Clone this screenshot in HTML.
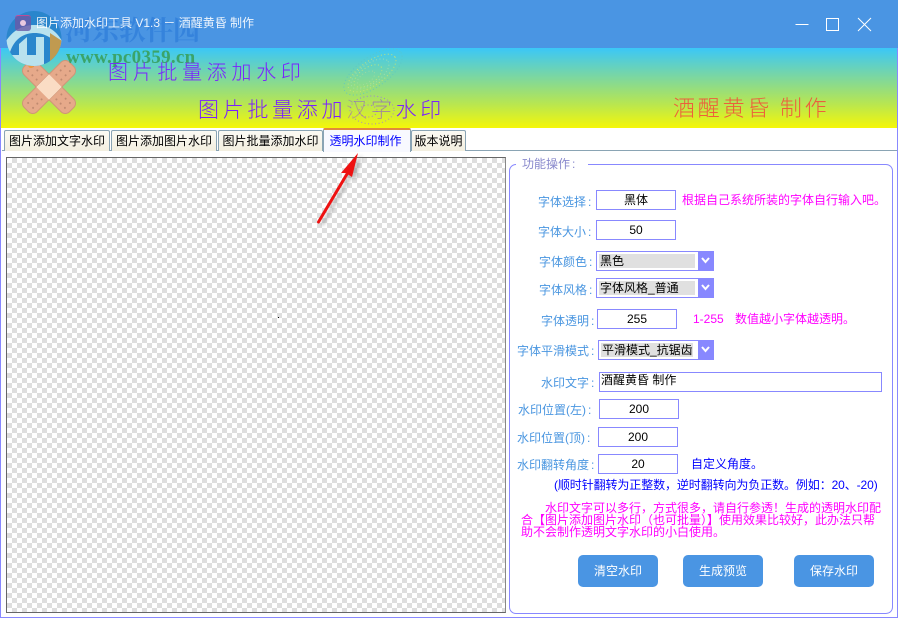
<!DOCTYPE html>
<html><head><meta charset="utf-8">
<style>
html,body{margin:0;padding:0}
body{width:898px;height:618px;position:relative;overflow:hidden;background:#fff;font-family:"Liberation Sans","WenQuanYi Zen Hei","Noto Sans CJK SC",sans-serif;font-size:12px;color:#000}
.a{position:absolute;white-space:nowrap}
.l{position:absolute;white-space:nowrap;color:#4a96e0;line-height:16px;height:16px}
.l span,.c{margin-left:2px}
.i{position:absolute;box-sizing:border-box;background:#fff;border:1px solid #8888ff;text-align:center;line-height:19px;height:20px;width:80px}
.s{position:absolute;box-sizing:border-box;background:#fff;border:1px solid #8888ff;height:20px}
.s b{position:absolute;font-weight:normal;left:2px;top:2px;height:14px;background:#e0e0e0;line-height:14px;padding-left:1px;box-sizing:border-box}
.s i{position:absolute;right:0;top:0;width:15px;height:18px;background:#8888ff}
.s svg{position:absolute;right:3px;top:5px}
.t{position:absolute;box-sizing:border-box;top:130px;height:21px;border:1px solid #8aa4b4;border-bottom:none;border-radius:2px 2px 0 0;background:linear-gradient(#fbfaf4,#f3efe0);text-align:center;line-height:21px}
.b{position:absolute;top:555px;width:80px;height:32px;border-radius:5px;background:#4a95e3;color:#fff;text-align:center;line-height:33px;font-size:12px}
.m{color:#ff00ff}.u{color:#0000ff}
.h{position:absolute;white-space:nowrap;font-family:"Noto Sans CJK SC",sans-serif;font-weight:300}
</style></head><body>
<div class="a" style="left:0;top:0;width:898px;height:48px;background:#4a95e3"></div>
<div class="a" style="left:1px;top:48px;width:896px;height:80px;background:linear-gradient(#3bc7f7,#b8e650 70%,#f5f708)"></div>
<div class="a" style="left:0;top:48px;width:1px;height:570px;background:#8888ff"></div>
<div class="a" style="left:897px;top:48px;width:1px;height:570px;background:#8888ff"></div>
<div class="a" style="left:0;top:617px;width:898px;height:1px;background:#8888ff"></div>

<!-- bandage -->
<svg class="a" style="left:18px;top:56px" width="62" height="62" viewBox="0 0 62 62">
<g transform="translate(31,31) rotate(45)">
<rect x="-32" y="-9" width="64" height="18" rx="6" fill="#e6a98a" stroke="#cf9578"/>
<rect x="-9" y="-32" width="18" height="64" rx="6" fill="#e6a98a" stroke="#cf9578"/>
<rect x="-9" y="-9" width="18" height="18" fill="#fadcc4"/>
<g fill="#c08a70"><circle cx="-26" cy="-3.500" r="1"/><circle cx="-26" cy="3.500" r="1"/><circle cx="-20" cy="-3.500" r="1"/><circle cx="-20" cy="3.500" r="1"/><circle cx="-14" cy="-3.500" r="1"/><circle cx="-14" cy="3.500" r="1"/><circle cx="26" cy="-3.500" r="1"/><circle cx="26" cy="3.500" r="1"/><circle cx="20" cy="-3.500" r="1"/><circle cx="20" cy="3.500" r="1"/><circle cx="14" cy="-3.500" r="1"/><circle cx="14" cy="3.500" r="1"/><circle cy="-26" cx="-3.500" r="1"/><circle cy="-26" cx="3.500" r="1"/><circle cy="-20" cx="-3.500" r="1"/><circle cy="-20" cx="3.500" r="1"/><circle cy="-14" cx="-3.500" r="1"/><circle cy="-14" cx="3.500" r="1"/><circle cy="26" cx="-3.500" r="1"/><circle cy="26" cx="3.500" r="1"/><circle cy="20" cx="-3.500" r="1"/><circle cy="20" cx="3.500" r="1"/><circle cy="14" cx="-3.500" r="1"/><circle cy="14" cx="3.500" r="1"/></g>
</g></svg>
<div class="a" style="left:28px;top:62px;width:6px;height:6px;border-radius:50%;background:#f0983c"></div>

<!-- site logo -->
<svg class="a" style="left:6px;top:11px" width="56" height="55" viewBox="0 0 56 55">
<defs><clipPath id="c"><circle cx="28" cy="27.500" r="27.500"/></clipPath></defs>
<g clip-path="url(#c)">
<rect width="56" height="55" fill="#2a86cc"/>
<path d="M0 30C8 18 18 14 29 14C41 14 50 19 56 30L56 38C48 27 38 22 29 22C18 22 9 27 4 41L0 41Z" fill="#b9e2ee"/>
<path d="M13 33L21 26L21 46L13 46Z" fill="#b9e2ee"/>
<path d="M44 22L56 30L56 55L44 55Z" fill="#c09a50"/>
<path d="M6 44L30 44L30 26L38 26L38 55L6 55Z" fill="#b9e2ee"/>
<path d="M38 25L44 27L44 55L38 55Z" fill="#2a86cc"/>
</g></svg>

<div class="a" style="left:65px;top:12px;font:bold 27px/34px 'Noto Serif CJK SC',serif;color:#3583dc">河东软件园</div>
<div class="a" style="left:66px;top:47px;font:bold 19px/22px 'Liberation Serif',serif;color:#3aa46a;letter-spacing:.3px">www.pc0359.cn</div>

<!-- app icon & title -->
<div class="a" style="left:15px;top:15px;width:16px;height:16px;background:#6a5aa8;border-radius:3px;border-top:1px solid #e0408a;box-sizing:border-box;opacity:.8"></div>
<div class="a" style="left:20px;top:20px;width:6px;height:6px;background:#e8c8e0;border-radius:50%"></div>
<div class="a" style="left:36px;top:15px;color:#fff;line-height:17px;font-size:12px;opacity:.9">图片添加水印工具 V1.3 － 酒醒黄昏 制作</div>

<!-- window buttons -->
<svg class="a" style="left:790px;top:10px" width="90" height="30" fill="none" stroke="#fff" stroke-width="1">
<path d="M5.500 14.500H18.500"/><rect x="36.500" y="8.500" width="12" height="12"/><path d="M68 8L81 21M81 8L68 21"/>
</svg>

<!-- swirl -->
<svg class="a" style="left:340px;top:48px" width="70" height="80" fill="none">
<g stroke-dasharray="1 2.500" stroke-width="1" opacity=".8">
<ellipse cx="33" cy="24" rx="34" ry="15" transform="rotate(-35 33 24)" stroke="#5cc4c8"/>
<ellipse cx="32" cy="25" rx="28" ry="12" transform="rotate(-35 32 25)" stroke="#d8e66a"/>
<ellipse cx="30" cy="26" rx="22" ry="10" transform="rotate(-35 30 26)" stroke="#a8e0b0"/>
<ellipse cx="28" cy="28" rx="16" ry="8" transform="rotate(-35 28 28)" stroke="#c8e878"/>
<ellipse cx="26" cy="30" rx="10" ry="5" transform="rotate(-35 26 30)" stroke="#a8dca0"/>
<ellipse cx="32" cy="62" rx="22" ry="14" stroke="#9a70e8"/>
<ellipse cx="30" cy="62" rx="15" ry="9" stroke="#e0e050"/>
<ellipse cx="28" cy="63" rx="9" ry="6" stroke="#a060f0"/>
</g></svg>

<!-- banner text -->
<div class="h" style="left:108px;top:58px;font-size:20px;line-height:26px;letter-spacing:4.700px;color:#7a20ff">图片批量添加水印</div>
<div class="h" style="left:198px;top:95px;font-size:21px;line-height:28px;letter-spacing:3.700px;color:#7a20ff">图片批量添加<span style="opacity:.35">汉</span><span style="opacity:.45">字</span>水印</div>
<div class="h" style="left:673px;top:93px;font-size:22px;line-height:28px;letter-spacing:2.800px;color:#f2503a;opacity:.9">酒醒黄昏 制作</div>

<!-- tabs -->
<div class="a" style="left:2px;top:150px;width:895px;height:1px;background:#8aa4b4"></div>
<div class="t" style="left:4px;width:106px">图片添加文字水印</div>
<div class="t" style="left:111px;width:106px">图片添加图片水印</div>
<div class="t" style="left:218px;width:105px">图片批量添加水印</div>
<div class="t" style="left:411px;width:55px">版本说明</div>
<div class="t" style="left:323px;width:88px;top:128px;height:24px;background:#f8f9ff;border-top:2px solid #e08a3c;color:#0000ff;line-height:22px;padding-right:3px">透明水印制作</div>

<!-- canvas -->
<div class="a" style="left:6px;top:157px;width:500px;height:456px;box-sizing:border-box;border:1px solid #666;border-right-color:#888;background-color:#fff;background-image:conic-gradient(#dedede 25%,#fff 0 50%,#dedede 0 75%,#fff 0);background-size:10px 10px;background-position:0 0"></div>
<div class="a" style="left:278px;top:317px;width:1px;height:1px;background:#000"></div>

<!-- arrow -->
<svg class="a" style="left:310px;top:148px" width="60" height="85" fill="none">
<g opacity=".45" transform="translate(4,2)" style="filter:blur(1.500px)"><path d="M8 75L36 27" stroke="#777" stroke-width="3"/><path d="M48 5L42 29L31 25Z" fill="#777"/></g>
<path d="M8.500 74L37 26" stroke="#ee1111" stroke-width="3" stroke-linecap="round"/>
<path d="M48 5L42 29L36 25L31 25Z" fill="#ee1111"/>
</svg>

<!-- group box -->
<div class="a" style="left:509px;top:164px;width:384px;height:450px;box-sizing:border-box;border:1px solid #8888ff;border-radius:7px"></div>
<div class="a" style="left:516px;top:156px;width:60px;background:#fff;padding:0 6px;line-height:16px;color:#8888cc">功能操作<span class="c">:</span></div>

<div class="l" style="left:538px;top:194px">字体选择<span>:</span></div>
<div class="i" style="left:596px;top:190px">黑体</div>
<div class="a m" style="left:682px;top:192px;line-height:16px">根据自己系统所装的字体自行输入吧。</div>

<div class="l" style="left:538px;top:224px">字体大小<span>:</span></div>
<div class="i" style="left:596px;top:220px">50</div>

<div class="l" style="left:539px;top:254px">字体颜色<span>:</span></div>
<div class="s" style="left:596px;top:251px;width:118px"><b style="width:96px">黑色</b><i></i><svg width="9" height="7" fill="none" stroke="#fff" stroke-width="2"><path d="M1 1L4.500 5L8 1"/></svg></div>

<div class="l" style="left:539px;top:282px">字体风格<span>:</span></div>
<div class="s" style="left:596px;top:278px;width:118px"><b style="width:96px">字体风格_普通</b><i></i><svg width="9" height="7" fill="none" stroke="#fff" stroke-width="2"><path d="M1 1L4.500 5L8 1"/></svg></div>

<div class="l" style="left:541px;top:313px">字体透明<span>:</span></div>
<div class="i" style="left:597px;top:309px">255</div>
<div class="a m" style="left:693px;top:311px;line-height:16px">1-255</div>
<div class="a m" style="left:735px;top:311px;line-height:16px">数值越小字体越透明。</div>

<div class="l" style="left:517px;top:343px">字体平滑模式<span>:</span></div>
<div class="s" style="left:598px;top:340px;width:116px"><b style="width:92px">平滑模式_抗锯齿</b><i></i><svg width="9" height="7" fill="none" stroke="#fff" stroke-width="2"><path d="M1 1L4.500 5L8 1"/></svg></div>

<div class="l" style="left:541px;top:375px">水印文字<span>:</span></div>
<div class="i" style="left:599px;top:372px;width:283px;text-align:left;padding-left:1px;line-height:15px">酒醒黄昏 制作</div>

<div class="l" style="left:518px;top:402px">水印位置(左)<span>:</span></div>
<div class="i" style="left:599px;top:399px">200</div>

<div class="l" style="left:517px;top:430px">水印位置(顶)<span>:</span></div>
<div class="i" style="left:598px;top:427px">200</div>

<div class="l" style="left:517px;top:457px">水印翻转角度<span>:</span></div>
<div class="i" style="left:598px;top:454px">20</div>
<div class="a u" style="left:691px;top:456px;line-height:16px">自定义角度。</div>

<div class="a u" style="left:554px;top:477px;line-height:16px;letter-spacing:-.1px">(顺时针翻转为正整数&#xFF0C;逆时翻转向为负正数。例如&#xFF1A;20、-20)</div>

<div class="a m" style="left:521px;top:502px;line-height:12px">
<span style="margin-left:24px">水印文字可以多行&#xFF0C;方式很多&#xFF0C;请自行参透&#xFF01;生成的透明水印配</span><br>合【图片添加图片水印&#xFF08;也可批量&#xFF09;】使用效果比较好&#xFF0C;此办法只帮<br>助不会制作透明文字水印的小白使用。</div>

<div class="b" style="left:578px">清空水印</div>
<div class="b" style="left:683px">生成预览</div>
<div class="b" style="left:794px">保存水印</div>
</body></html>
